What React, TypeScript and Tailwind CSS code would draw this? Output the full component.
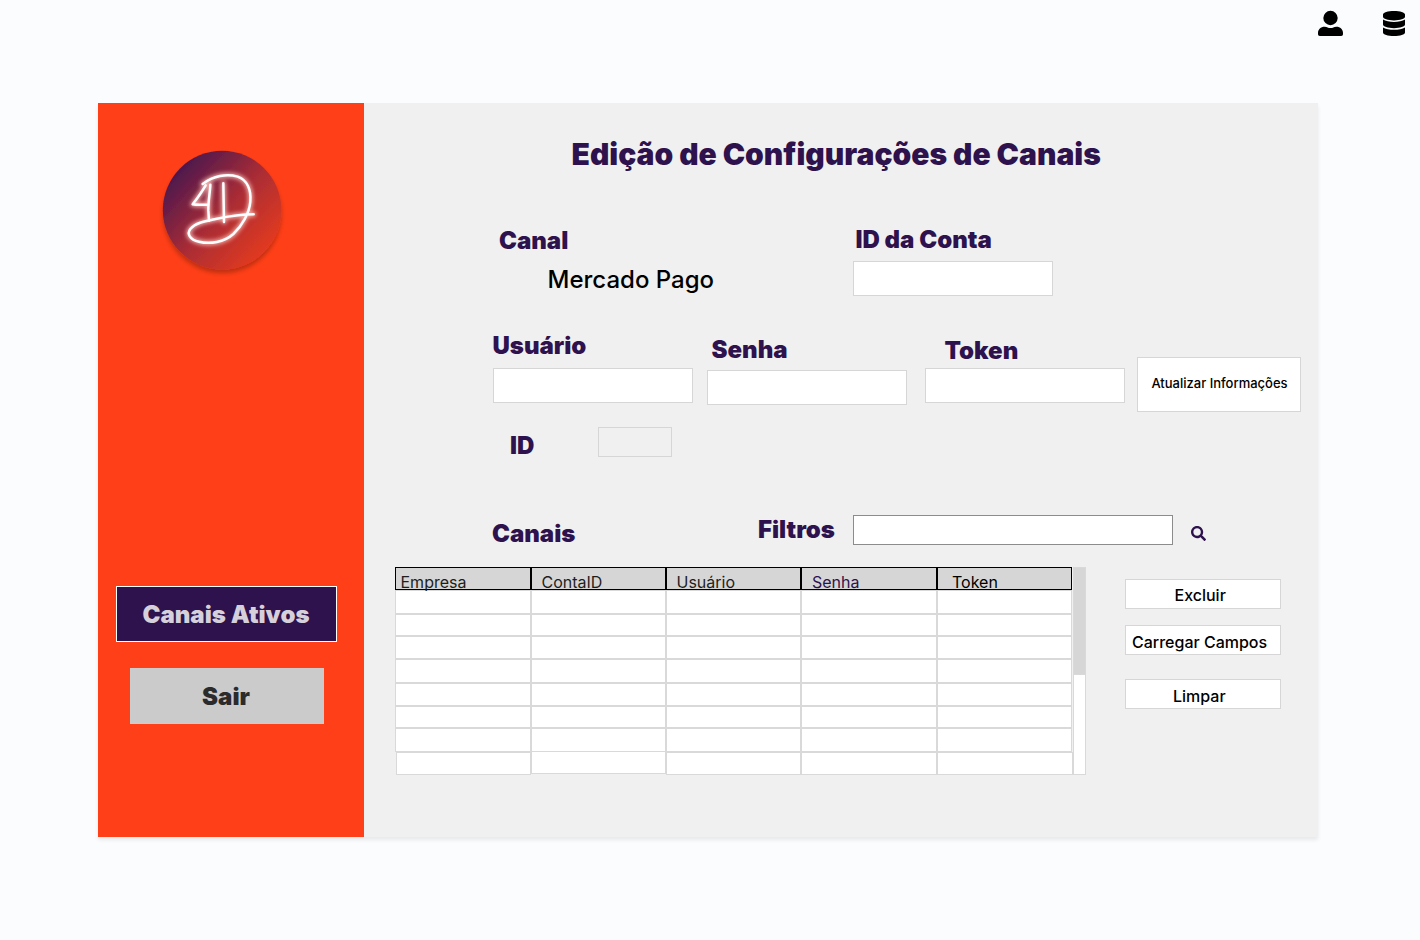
import { FaDatabase, FaSearch } from "react-icons/fa";

const label = "text-2xl leading-[26px] font-black text-[#2e124d] whitespace-nowrap";
const field = "border border-[#d6d6d6] bg-white outline-none";
const action = "flex h-[30px] w-[156px] border border-[#d6d6d6] bg-white text-base leading-4 font-medium text-black whitespace-nowrap";

const columns = [
  { name: "Empresa", width: "w-[136px]", pad: "pl-[4.5px]", color: "text-[#1e1e1e]" },
  { name: "ContaID", width: "w-[135px]", pad: "pl-[9.5px]", color: "text-[#1e1e1e]" },
  { name: "Usuário", width: "w-[135px]", pad: "pl-[9.5px]", color: "text-[#1e1e1e]" },
  { name: "Senha", width: "w-[136px]", pad: "pl-[10px]", color: "text-[#2e124d]" },
  { name: "Token", width: "w-[135px]", pad: "pl-[14px]", color: "text-black" },
];

const rowHeights = ["h-6", "h-[22px]", "h-[23px]", "h-6", "h-[23px]", "h-[22px]", "h-6"];

const lastRow = [
  "ml-px w-[135px]",
  "-mt-px w-[135px]",
  "w-[135px]",
  "w-[136px]",
  "w-[136px]",
];

function Logo() {
  return (
    <svg className="ml-[52px] mt-[37px] block size-[145px]" viewBox="0 0 435 435" fill="none">
      <defs>
        <linearGradient id="disc" x1="70" y1="90" x2="350" y2="350" gradientUnits="userSpaceOnUse">
          <stop offset="0" stopColor="#48174f" />
          <stop offset="0.5" stopColor="#a82c35" />
          <stop offset="1" stopColor="#e63b1e" />
        </linearGradient>
        <filter id="shadow" x="-20%" y="-20%" width="140%" height="140%">
          <feDropShadow dx="0" dy="11" stdDeviation="6" floodColor="#000" floodOpacity="0.25" />
        </filter>
        <filter id="glow" x="-20%" y="-20%" width="140%" height="140%">
          <feGaussianBlur stdDeviation="7" />
        </filter>
        <g id="mark" strokeLinecap="round" strokeLinejoin="round">
          <path d="M158 132C190 108 230 100 263 110C292 120 304 150 301 185C298 220 276 257 250 282C222 307 180 313 147 305C119 299 110 281 121 267C136 248 168 243 197 237C235 229 270 223 311 223" />
          <path d="M167 136C156 155 141 176 128 193C143 196 158 194 174 194" />
          <path d="M181 134C180 160 174 187 175 212L177 242" />
          <path d="M220 130L222 246" />
        </g>
      </defs>
      <circle cx="216.500" cy="210.500" r="178" fill="url(#disc)" filter="url(#shadow)" />
      <use href="#mark" stroke="#f5b3ae" strokeWidth="14" filter="url(#glow)" />
      <use href="#mark" stroke="#fff" strokeWidth="7.5" />
    </svg>
  );
}

function UserIcon() {
  return (
    <svg className="h-[26px] w-[26px]" viewBox="0 0 78 78" fill="#000">
      <circle cx="37.5" cy="24" r="21.5" />
      <path d="M20 50C28 50 30 54 37.500 54C45 54 47 50 55 50C67 50 75 58 75 68V72C75 75.500 73 78 69.500 78H5.500C2 78 0 75.500 0 72V68C0 58 8 50 20 50Z" />
    </svg>
  );
}

function ChannelTable() {
  return (
    <div className="flex">
      <div className="w-[678px]">
        <div className="relative z-10 flex h-[23px]">
          {columns.map((c) => (
            <div key={c.name} className={`${c.width} ${c.pad} ${c.color} border border-black bg-[#d6d6d6] pt-1.5 text-base leading-4`}>
              {c.name}
            </div>
          ))}
        </div>
        {rowHeights.map((h, i) => (
          <div key={i} className={`flex ${h}`}>
            {columns.map((c) => (
              <div key={c.name} className={`${c.width} border border-[#d9d9d9] bg-white`} />
            ))}
          </div>
        ))}
        <div className="flex items-start">
          {lastRow.map((c, i) => (
            <div key={i} className={`${c} h-[23px] border border-[#d9d9d9] bg-white`} />
          ))}
        </div>
      </div>
      <div className="h-[208px] w-[13px] border border-[#d9d9d9] bg-white">
        <div className="-mx-px -mt-px h-[108px] border border-[#d9d9d9] bg-[#d6d6d6]" />
      </div>
    </div>
  );
}

export default function App() {
  return (
    <div className="flex h-[940px] w-[1420px] flex-col overflow-hidden bg-[#fafcfe] font-['Inter',sans-serif]">
      <header className="flex h-[103px] items-start justify-end pr-[15px] pt-2.5">
        <UserIcon />
        <FaDatabase className="ml-[39px] mt-px h-[25px] w-[22px] text-black" preserveAspectRatio="none" />
      </header>
      <main className="ml-[98px] flex h-[734px] w-[1220px] bg-[#f0f0f0] shadow-[0_3px_4px_rgba(0,0,0,0.08)]">
        <aside className="flex w-[266px] flex-col bg-[#ff3f17]">
          <Logo />
          <button className="ml-[18px] mt-[301px] flex h-14 w-[221px] items-center justify-center border border-white bg-[#2e124d] pt-0.5 pr-px text-2xl font-black text-[#d6d0db]">
            Canais Ativos
          </button>
          <button className="ml-8 mt-[26px] flex h-14 w-[194px] items-center justify-center bg-[#cbcbcb] pt-0.5 pr-0.5 text-2xl font-black text-[#2b2b2b]">
            Sair
          </button>
        </aside>
        <section className="flex w-[954px] flex-col">
          <h1 className="ml-[207.5px] mt-9 h-[30px] text-[30px] leading-[30px] font-black whitespace-nowrap text-[#2e124d]">
            Edição de Configurações de Canais
          </h1>

          <div className="mt-[58px] flex h-[70px]">
            <div className="ml-[135px] w-[354px] pt-[1px]">
              <h2 className={label}>Canal</h2>
              <p className="ml-[48.5px] mt-[14px] text-2xl leading-6 font-medium text-black">Mercado Pago</p>
            </div>
            <div>
              <label className={`${label} ml-[2.5px] block`}>ID da Conta</label>
              <input className={`${field} mt-2 block h-[35px] w-[200px]`} />
            </div>
          </div>

          <div className="mt-9 flex h-[79px] items-start">
            <div className="ml-[129px] w-[214px]">
              <label className={`${label} -ml-[0.5px] block`}>Usuário</label>
              <input className={`${field} mt-[9px] block h-[35px] w-[200px]`} />
            </div>
            <div className="w-[218px] pt-1">
              <label className={`${label} ml-[4.5px] block`}>Senha</label>
              <input className={`${field} mt-[7px] block h-[35px] w-[200px]`} />
            </div>
            <div className="w-[212px] pt-[5px]">
              <label className={`${label} ml-[19.5px] block`}>Token</label>
              <input className={`${field} mt-1 block h-[35px] w-[200px]`} />
            </div>
            <button className="mt-6 flex h-[55px] w-[164px] justify-center border border-[#d6d6d6] bg-white pl-px pt-[19px] text-[13px] leading-[13px] font-medium whitespace-nowrap text-black">
              Atualizar Informações
            </button>
          </div>

          <div className="mt-[15px] flex h-[30px] items-start">
            <label className={`${label} ml-[146px] mt-1.5 w-[88px]`}>ID</label>
            <input className="h-[30px] w-[74px] border border-[#d6d6d6] bg-transparent outline-none" />
          </div>

          <div className="mt-[58px] flex h-[52px] items-start">
            <h2 className={`${label} ml-[128px] mt-[6px] w-[266px]`}>Canais</h2>
            <label className={`${label} mt-0.5 w-[95px]`}>Filtros</label>
            <input className="h-[30px] w-80 border border-[#8c8c8c] bg-white outline-none" />
            <FaSearch className="ml-[18px] mt-[11px] size-[15px] text-[#2e124d]" />
          </div>

          <div className="ml-[31px] flex">
            <ChannelTable />
            <div className="ml-[39px] flex flex-col pt-3">
              <button className={`${action} pl-[48.5px] pt-[7px]`}>Excluir</button>
              <button className={`${action} mt-4 pl-1.5 pt-2`}>Carregar Campos</button>
              <button className={`${action} mt-6 pl-[47px] pt-2`}>Limpar</button>
            </div>
          </div>
        </section>
      </main>
    </div>
  );
}
